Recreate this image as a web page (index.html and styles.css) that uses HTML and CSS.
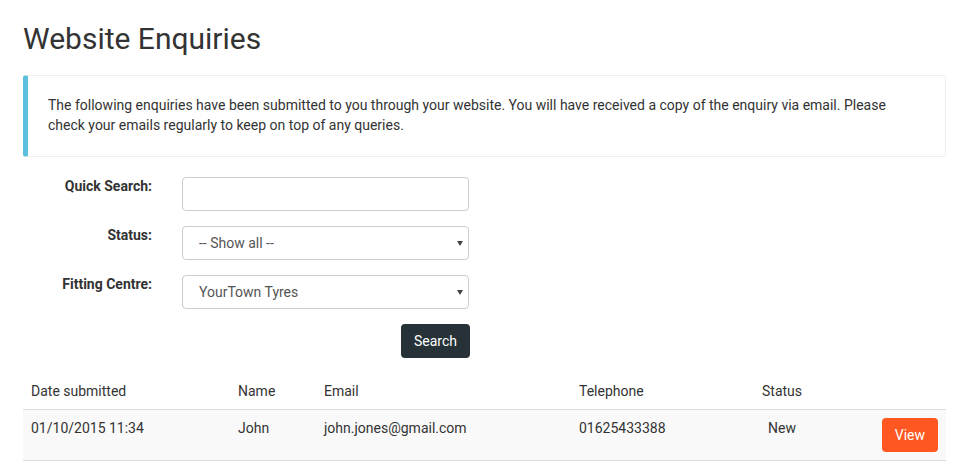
FILE: index.html
```html
<!DOCTYPE html>
<html lang="en">
<head>
<meta charset="utf-8">
<title>Website Enquiries</title>
<link rel="stylesheet" href="styles.css">
</head>
<body>
<div class="page">
  <h1 class="title">Website Enquiries</h1>
  <div class="callout">
    The following enquiries have been submitted to you through your website. You will have received a copy of the enquiry via email. Please check your emails regularly to keep on top of any queries.
  </div>
  <form class="filters">
    <div class="form-row">
      <label class="form-label" for="q">Quick Search:</label>
      <div class="form-field"><input class="control" id="q" type="text"></div>
    </div>
    <div class="form-row">
      <label class="form-label" for="status">Status:</label>
      <div class="form-field select-wrap">
        <select class="control select" id="status"><option>-- Show all --</option></select>
      </div>
    </div>
    <div class="form-row">
      <label class="form-label" for="centre">Fitting Centre:</label>
      <div class="form-field select-wrap">
        <select class="control select" id="centre"><option>YourTown Tyres</option></select>
      </div>
    </div>
    <div class="form-row">
      <div class="form-label"></div>
      <div class="form-field actions"><button type="button" class="btn btn-dark">Search</button></div>
    </div>
  </form>
  <table class="enquiries">
    <colgroup>
      <col class="c-date"><col class="c-name"><col class="c-email"><col class="c-tel"><col class="c-status"><col class="c-action">
    </colgroup>
    <thead>
      <tr><th>Date submitted</th><th>Name</th><th>Email</th><th>Telephone</th><th class="center">Status</th><th></th></tr>
    </thead>
    <tbody>
      <tr>
        <td>01/10/2015 11:34</td>
        <td>John</td>
        <td>john.jones@gmail.com</td>
        <td>01625433388</td>
        <td class="center">New</td>
        <td class="right"><button type="button" class="btn btn-orange">View</button></td>
      </tr>
    </tbody>
  </table>
</div>
</body>
</html>
```

FILE: styles.css
```css
* { box-sizing: border-box; }
html, body { margin: 0; padding: 0; background: #fff; }
body {
  font-family: Roboto, "Liberation Sans", Arial, sans-serif;
  font-size: 14px;
  line-height: 20px;
  color: #333;
}
.page { padding: 0 19px 0 23px; }
.title {
  margin: 22px 0 20px 0;
  font-size: 30px;
  line-height: 33px;
  font-weight: 400;
  color: #333;
}
.callout {
  padding: 19px 20px 21px 20px;
  border: 1px solid #eee;
  border-left: 5px solid #5bc0de;
  border-radius: 3px;
  margin-bottom: 20px;
}
.filters { margin: 0; }
.form-row {
  display: flex;
  align-items: flex-start;
  margin-bottom: 15px;
}
.form-label {
  width: 144px;
  flex: none;
  padding-right: 15px;
  text-align: right;
  font-weight: 700;
  line-height: 18px;
}
.form-field {
  width: 317px;
  flex: none;
  padding: 0 15px;
}
.control {
  display: block;
  width: 287px;
  height: 34px;
  padding: 6px 16px;
  font-family: inherit;
  font-size: 14px;
  color: #555;
  background: #fff;
  border: 1px solid #ccc;
  border-radius: 4px;
  outline: none;
}
.select-wrap { position: relative; }
.select { appearance: none; -webkit-appearance: none; }
.select-wrap::after {
  content: "";
  position: absolute;
  left: 290px;
  top: 15px;
  width: 0;
  height: 0;
  border-left: 3.5px solid transparent;
  border-right: 3.5px solid transparent;
  border-top: 5px solid #444;
  pointer-events: none;
}
.actions { display: flex; justify-content: flex-end; padding-right: 14px; }
.btn {
  font-family: inherit;
  font-size: 14px;
  line-height: 20px;
  padding: 7px 12px;
  border: 0;
  border-radius: 4px;
  color: #fff;
  cursor: pointer;
}
.btn-dark { background: #263238; height: 34px; padding: 7px 13px; }
.btn-orange { background: #ff5722; height: 34px; padding: 7px 13px; }
.enquiries {
  width: 923px;
  border-collapse: collapse;
  table-layout: fixed;
}
.c-date { width: 207px; }
.c-name { width: 86px; }
.c-email { width: 255px; }
.c-tel { width: 183px; }
.c-status { width: 56px; }
.c-action { width: 136px; }
.enquiries th, .enquiries td {
  padding: 8px;
  text-align: left;
  vertical-align: top;
  font-weight: 400;
  white-space: nowrap;
}
.enquiries thead th { border-bottom: 1px solid #ddd; }
.enquiries tbody td { background: #f9f9f9; border-bottom: 1px solid #ddd; }
.enquiries .center { text-align: center; }
.enquiries .right { text-align: right; }
```
